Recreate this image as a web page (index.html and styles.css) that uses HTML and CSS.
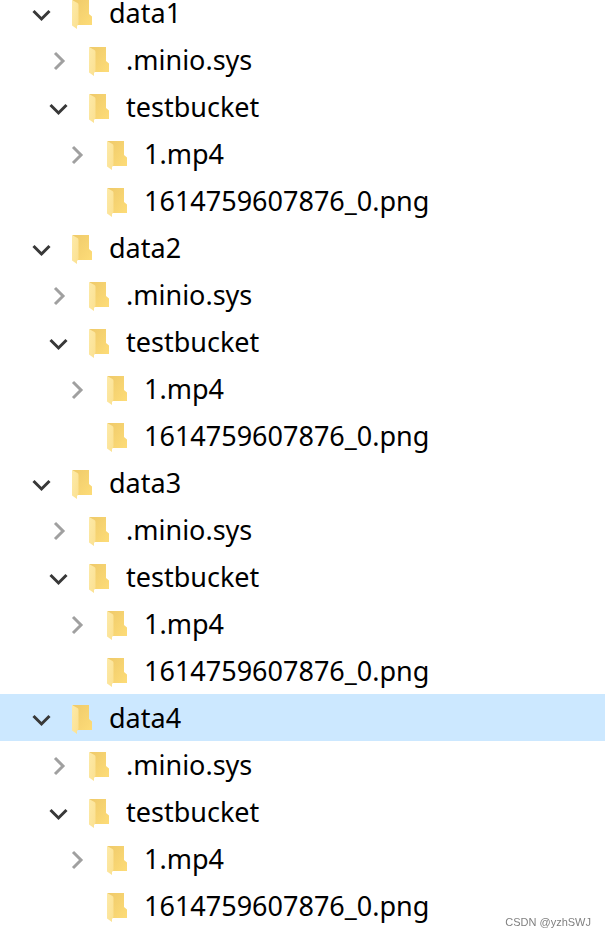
FILE: index.html
```html
<!DOCTYPE html>
<html lang="en">
<head>
  <meta charset="UTF-8">
  <meta name="viewport" content="width=device-width, initial-scale=1.0">
  <title>Folders</title>
  <link rel="stylesheet" href="styles.css">
</head>
<body>
  <!-- Shared icons -->
  <svg class="icon-defs" aria-hidden="true">
    <defs>
      <linearGradient id="folder-back" x1="0" y1="0" x2="1" y2="1">
        <stop offset="0" stop-color="#efca6a"/>
        <stop offset="1" stop-color="#fddc78"/>
      </linearGradient>
      <linearGradient id="folder-front" x1="0" y1="0" x2="1" y2="1">
        <stop offset="0" stop-color="#fdeaa8"/>
        <stop offset="1" stop-color="#fbe090"/>
      </linearGradient>
    </defs>
    <symbol id="folder" viewBox="0 0 22 34">
      <path d="M1.5 4H18V18L21 20.5V29H5Z" fill="url(#folder-back)"/>
      <path d="M1 4L6.5 7Q7.5 7.5 7.5 9V27Q7.5 29 6 30V33L1 29.5Z" fill="url(#folder-front)"/>
    </symbol>
    <symbol id="chevron-down" viewBox="0 0 20 20">
      <path d="M2.5 8L10.5 16L18.5 8" fill="none" stroke="currentColor" stroke-width="3"/>
    </symbol>
    <symbol id="chevron-right" viewBox="0 0 20 22">
      <path d="M7 4L15 12L7 20" fill="none" stroke="currentColor" stroke-width="3"/>
    </symbol>
  </svg>

  <ul class="tree" id="tree"></ul>
  <footer class="credit">CSDN @yzhSWJ</footer>

  <script>
    // Folders on every data disk
    const drives = ["data1", "data2", "data3", "data4"];
    const selected = "data4";

    const folders = drives.map((name) => ({
      name,
      children: [
        { name: ".minio.sys", closed: true },
        {
          name: "testbucket",
          children: [
            { name: "1.mp4", closed: true },
            { name: "1614759607876_0.png" }
          ]
        }
      ]
    }));

    function icon(id, className) {
      return `<svg class="${className}" aria-hidden="true"><use href="#${id}"/></svg>`;
    }

    // Build one row and the rows below it
    function renderItem(item) {
      const open = Boolean(item.children);
      let toggle = '<span class="toggle"></span>';
      if (open || item.closed) {
        toggle = `<button class="toggle ${open ? "open" : ""}" aria-label="Toggle ${item.name}" aria-expanded="${open}">
          ${icon(open ? "chevron-down" : "chevron-right", "chevron")}
        </button>`;
      }
      const children = open ? `<ul class="children">${item.children.map(renderItem).join("")}</ul>` : "";
      return `<li>
        <div class="row ${item.name === selected ? "selected" : ""}">
          ${toggle}${icon("folder", "folder")}<span class="name">${item.name}</span>
        </div>
        ${children}
      </li>`;
    }

    const tree = document.getElementById("tree");
    tree.innerHTML = folders.map(renderItem).join("");

    // Open or close a folder
    tree.addEventListener("click", (event) => {
      const button = event.target.closest("button");
      if (!button) return;
      const open = button.classList.toggle("open");
      button.setAttribute("aria-expanded", open);
      button.querySelector("use").setAttribute("href", open ? "#chevron-down" : "#chevron-right");
      const children = button.closest("li").querySelector(".children");
      if (children) children.hidden = !open;
    });
  </script>
</body>
</html>
```

FILE: styles.css
```css
body {
  margin: 0;
  background: #ffffff;
  color: #000000;
  font-family: "Noto Sans", "Open Sans", sans-serif;
  overflow-x: hidden;
}

.icon-defs {
  position: absolute;
  width: 0;
  height: 0;
}

.tree,
.children {
  list-style: none;
  margin: 0;
  padding: 0;
}

/* The list is scrolled a little past its first row */
.tree {
  margin-top: -11px;
}

.row {
  display: flex;
  align-items: center;
  height: 47px;
  padding-left: 31px;
}

.children .row {
  padding-left: 48px;
}

.children .children .row {
  padding-left: 66px;
}

.row.selected {
  background: #cce8ff;
}

.toggle {
  width: 20px;
  height: 22px;
  padding: 0;
  border: none;
  background: none;
  color: #a0a0a0;
}

.toggle.open {
  color: #383838;
}

.chevron {
  display: block;
  width: 20px;
  height: 22px;
}

.folder {
  width: 22px;
  height: 34px;
  margin-left: 20px;
  margin-right: 16px;
}

.name {
  font-size: 27px;
  line-height: 26px;
  white-space: nowrap;
}

.credit {
  position: fixed;
  right: 14px;
  bottom: 8px;
  color: #808080;
  font-family: "Liberation Sans", Arial, sans-serif;
  font-size: 11px;
  line-height: 16px;
}
```
